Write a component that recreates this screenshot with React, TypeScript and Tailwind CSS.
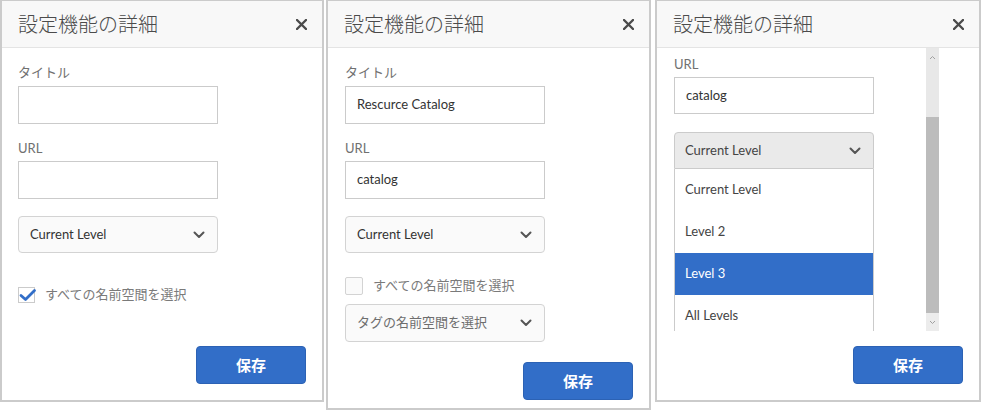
import React from "react";

const XIcon = () => (
  <svg width="11" height="11" viewBox="0 0 11 11" className="shrink-0">
    <path d="M1 1 L10 10 M10 1 L1 10" stroke="#4b4b4b" strokeWidth="2.4" strokeLinecap="round" />
  </svg>
);

const Chevron = ({ color = "#555" }: { color?: string }) => (
  <svg width="12" height="8" viewBox="0 0 12 8" className="shrink-0">
    <path d="M1.5 1.5 L6 6 L10.5 1.5" stroke={color} strokeWidth="2" fill="none" strokeLinecap="round" strokeLinejoin="round" />
  </svg>
);

const Header = () => (
  <div className="h-[47px] shrink-0 bg-[#f8f8f8] border-b border-[#e4e4e4] flex items-center justify-between pl-4 pr-[15px]">
    <span className="text-[20px] leading-[24px] text-[#4b4b4b] font-light">設定機能の詳細</span>
    <XIcon />
  </div>
);

const Label = ({ children, className = "" }: { children: React.ReactNode; className?: string }) => (
  <div className={"shrink-0 h-4 leading-4 text-[13px] text-[#707070] " + className}>{children}</div>
);

const Input = ({ value = "", className = "" }: { value?: string; className?: string }) => (
  <div className={"shrink-0 w-[200px] border border-[#cbcbcb] bg-white flex items-center pl-[11px] text-[13px] text-[#333] " + className}>
    {value}
  </div>
);

const Select = ({ text, className = "", textColor = "text-[#333]" }: { text: string; className?: string; textColor?: string }) => (
  <div className={"shrink-0 w-[200px] border border-[#d3d3d3] bg-[#fafafa] rounded-[4px] flex items-center justify-between pl-[11px] pr-[12px] text-[13px] " + textColor + " " + className}>
    <span>{text}</span>
    <Chevron />
  </div>
);

const SaveButton = () => (
  <div className="shrink-0 self-end w-[110px] h-[38px] rounded-[4px] bg-[#326ec8] border border-[#2c62b4] flex items-center justify-center text-white text-[15px] font-bold">
    保存
  </div>
);

export default function App() {
  return (
    <div className="w-[981px] h-[412px] bg-white flex items-start font-['Lato','Noto_Sans_CJK_JP',sans-serif]">
      {/* Panel 1 */}
      <div className="w-[324px] h-[402px] border-x-2 border-b-2 border-t border-[#cbcbcb] flex flex-col">
        <Header />
        <div className="flex-1 flex flex-col px-4 pb-4">
          <Label className="mt-4">タイトル</Label>
          <Input className="mt-[6px] h-[38px]" />
          <Label className="mt-4">URL</Label>
          <Input className="mt-[5px] h-[38px]" />
          <Select text="Current Level" className="mt-[17px] h-[37px]" />
          <div className="shrink-0 mt-[34px] h-4 flex items-center gap-[10px]">
            <div className="relative w-[17px] h-[16px] border border-[#cbcbcb] bg-white">
              <svg width="18" height="14" viewBox="0 0 18 14" className="absolute left-[0px] top-[0px]">
                <path d="M2 7.5 L6.5 11.5 L15.5 2.5" stroke="#326ec8" strokeWidth="2.8" fill="none" strokeLinecap="round" strokeLinejoin="round" />
              </svg>
            </div>
            <span className="text-[13px] text-[#7a7a7a]">すべての名前空間を選択</span>
          </div>
          <div className="flex-1" />
          <SaveButton />
        </div>
      </div>

      {/* Panel 2 */}
      <div className="ml-[2px] w-[325px] h-[410px] border-x-2 border-b-2 border-t border-[#cbcbcb] flex flex-col">
        <Header />
        <div className="flex-1 flex flex-col pl-[17px] pr-4 pb-2">
          <Label className="mt-4">タイトル</Label>
          <Input className="mt-[6px] h-[38px]" value="Rescurce Catalog" />
          <Label className="mt-4">URL</Label>
          <Input className="mt-[5px] h-[38px]" value="catalog" />
          <Select text="Current Level" className="mt-[17px] h-[37px]" />
          <div className="shrink-0 mt-[24px] h-[18px] flex items-center gap-[10px]">
            <div className="w-[18px] h-[18px] border border-[#d3d3d3] bg-[#fafafa] rounded-[2px]" />
            <span className="text-[13px] text-[#7a7a7a]">すべての名前空間を選択</span>
          </div>
          <Select text="タグの名前空間を選択" textColor="text-[#6e6e6e]" className="mt-[9px] h-[38px]" />
          <div className="flex-1" />
          <SaveButton />
        </div>
      </div>

      {/* Panel 3 */}
      <div className="ml-[4px] w-[326px] h-[402px] border-x-2 border-b-2 border-t border-[#cbcbcb] flex flex-col">
        <Header />
        <div className="h-[283px] shrink-0 flex">
          <div className="w-[269px] h-full overflow-hidden pl-[17px] flex flex-col">
            <Label className="mt-2">URL</Label>
            <Input className="mt-[5px] h-[37px]" value="catalog" />
            <div className="mt-[18px] w-[200px] h-[37px] shrink-0 border border-[#cbcbcb] bg-[#eaeaea] rounded-t-[4px] flex items-center justify-between pl-[10px] pr-[12px] text-[13px] text-[#444]">
              <span>Current Level</span>
              <Chevron />
            </div>
            <div className="w-[200px] shrink-0 border-x border-[#cbcbcb] bg-white flex flex-col text-[13px] text-[#444]">
              <div className="shrink-0 h-[42px] flex items-center pl-[10px]">Current Level</div>
              <div className="shrink-0 h-[42px] flex items-center pl-[10px]">Level 2</div>
              <div className="shrink-0 h-[42px] flex items-center pl-[10px] bg-[#326ec8] text-white">Level 3</div>
              <div className="shrink-0 h-[42px] flex items-center pl-[10px]">All Levels</div>
            </div>
          </div>
          <div className="w-[13px] h-full bg-[#e8e8e8] flex flex-col">
            <div className="h-[18px] flex items-center justify-center">
              <svg width="7" height="5" viewBox="0 0 7 5">
                <path d="M1 4 L3.5 1.5 L6 4" stroke="#a0a0a0" strokeWidth="1" fill="none" />
              </svg>
            </div>
            <div className="h-[51px]" />
            <div className="flex-1 bg-[#bcbcbc]" />
            <div className="h-[18px] bg-[#ececec] flex items-center justify-center">
              <svg width="7" height="5" viewBox="0 0 7 5">
                <path d="M1 1 L3.5 3.5 L6 1" stroke="#a0a0a0" strokeWidth="1" fill="none" />
              </svg>
            </div>
          </div>
        </div>
        <div className="flex-1 flex flex-col pr-4 pb-4">
          <div className="flex-1" />
          <SaveButton />
        </div>
      </div>
    </div>
  );
}
